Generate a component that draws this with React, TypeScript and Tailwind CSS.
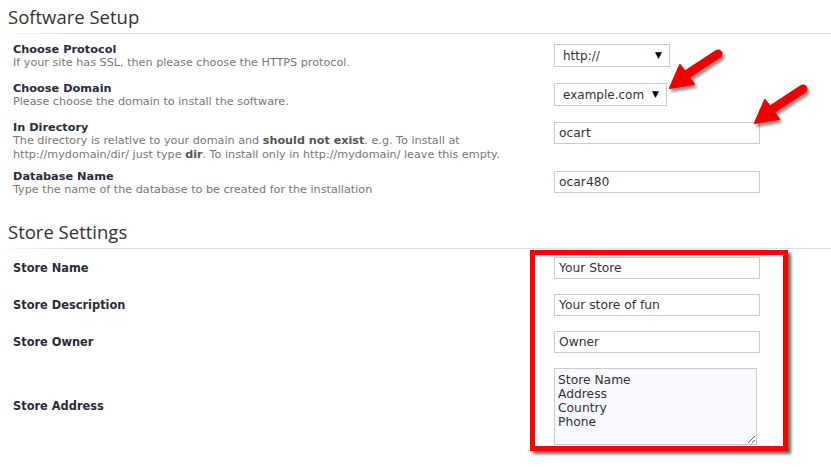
import React from "react";

const body = { fontFamily: '"DejaVu Sans", Verdana, sans-serif' };
const head = { fontFamily: '"Open Sans", "Segoe UI", sans-serif' };

function Select({ value, width }: { value: string; width: string }) {
  return (
    <div className={`flex h-[23px] items-center justify-between border border-[#cccccc] bg-white pl-[8px] pr-[7px] text-[12px] text-[#333] ${width}`}>
      <span>{value}</span>
      <span className="text-[9px] text-black">▼</span>
    </div>
  );
}

function TextInput({ value, width = "w-[206px]" }: { value: string; width?: string }) {
  return (
    <div className={`flex h-[22px] items-center border border-[#cccccc] bg-white pl-[4px] text-[12.3px] text-[#333] ${width}`}>
      {value}
    </div>
  );
}

function Heading({ children }: { children: React.ReactNode }) {
  return (
    <div>
      <div className="pl-[8px] text-[18.5px] leading-[26px] text-[#333]" style={head}>
        {children}
      </div>
      <div className="mt-[3px] h-px bg-gradient-to-r from-white via-[#d6e1e9] via-[8%] to-[#d6e1e9]" />
    </div>
  );
}

function Row({ label, desc, control, className }: { label: string; desc: React.ReactNode; control: React.ReactNode; className: string }) {
  return (
    <div className={`flex items-start ${className}`}>
      <div className="w-[554px] pl-[13px] pr-[10px]">
        <div className="text-[11.3px] font-bold leading-[13px] text-[#2b2b3a]">{label}</div>
        <div className="text-[11.2px] leading-[14px] text-[#777]">{desc}</div>
      </div>
      <div className="pt-px">{control}</div>
    </div>
  );
}

function StoreRow({ label, control, className }: { label: string; control: React.ReactNode; className: string }) {
  return (
    <div className={`flex items-center ${className}`}>
      <div className="w-[554px] pl-[13px] text-[11.4px] font-bold leading-[13px] text-[#2b2b3a]">{label}</div>
      {control}
    </div>
  );
}

function Arrow({ className }: { className: string }) {
  return (
    <svg className={className} width="64" height="46" viewBox="0 0 64 46">
      <defs>
        <filter id="sh" x="-30%" y="-30%" width="160%" height="160%">
          <feDropShadow dx="2" dy="3" stdDeviation="1.6" floodColor="#000" floodOpacity="0.45" />
        </filter>
      </defs>
      <g filter="url(#sh)">
        <path d="M52 6 L20 27" stroke="#ee0000" strokeWidth="9" strokeLinecap="round" />
        <path d="M4 40 L14 17 L28 36 Z" fill="#ee0000" stroke="#ee0000" strokeWidth="2" strokeLinejoin="round" />
      </g>
    </svg>
  );
}

export default function App() {
  return (
    <div className="relative h-[467px] w-[831px] overflow-hidden bg-white" style={body}>
      <div className="pt-[4px]">
        <Heading>Software Setup</Heading>
        <Row
          className="mt-[9px]"
          label="Choose Protocol"
          desc="If your site has SSL, then please choose the HTTPS protocol."
          control={<Select value="http://" width="w-[116px]" />}
        />
        <Row
          className="mt-[12px]"
          label="Choose Domain"
          desc="Please choose the domain to install the software."
          control={<Select value="example.com" width="w-[113px]" />}
        />
        <Row
          className="mt-[12px]"
          label="In Directory"
          desc={
            <>
              The directory is relative to your domain and <b className="text-[#555]">should not exist</b>. e.g. To install at
              <br />
              http://mydomain/dir/ just type <b className="text-[#555]">dir</b>. To install only in http://mydomain/ leave this empty.
            </>
          }
          control={<TextInput value="ocart" />}
        />
        <Row
          className="mt-[8px]"
          label="Database Name"
          desc="Type the name of the database to be created for the installation"
          control={<TextInput value="ocar480" />}
        />
        <div className="mt-[22px]">
          <Heading>Store Settings</Heading>
        </div>
        <StoreRow className="mt-[8px]" label="Store Name" control={<TextInput value="Your Store" />} />
        <StoreRow className="mt-[15px]" label="Store Description" control={<TextInput value="Your store of fun" />} />
        <StoreRow className="mt-[15px]" label="Store Owner" control={<TextInput value="Owner" />} />
        <StoreRow
          className="mt-[15px]"
          label="Store Address"
          control={
            <textarea
              readOnly
              defaultValue={"Store Name\nAddress\nCountry\nPhone"}
              className="h-[77px] w-[203px] border border-[#cccccc] bg-[#f8fafd] px-[3px] pt-[4px] text-[12.3px] leading-[14px] text-[#333] outline-none"
              style={body}
            />
          }
        />
      </div>

      <div className="pointer-events-none absolute left-[530px] top-[250px] h-[201px] w-[258px] border-[5px] border-[#ff0000] shadow-[3px_3px_3px_rgba(0,0,0,0.6)]" />
      <Arrow className="absolute left-[666px] top-[48px]" />
      <Arrow className="absolute left-[751px] top-[83px]" />
    </div>
  );
}
